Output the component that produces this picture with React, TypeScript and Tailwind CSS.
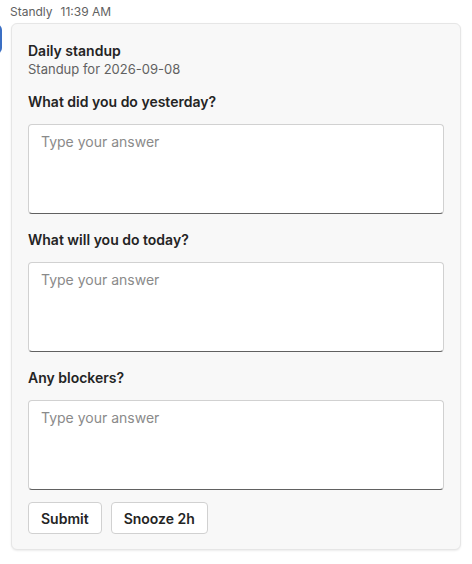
import React from "react";

function Question({ label, className }: { label: string; className: string }) {
  return (
    <div className={className}>
      <div className="text-[14px] leading-[20px] font-semibold text-[#242424]">{label}</div>
      <textarea
        placeholder="Type your answer"
        className="mt-[12px] block h-[90px] w-full resize-none rounded-[4px] border border-[#d1d1d1] border-b-[#616161] bg-white px-[12px] pt-[6px] text-[14px] leading-[22px] text-[#242424] placeholder:text-[#8a8a8a] outline-none"
      />
    </div>
  );
}

export default function App() {
  return (
    <div
      className="relative h-[564px] w-[472px] overflow-hidden bg-white"
      style={{ fontFamily: "Inter, 'Noto Sans', sans-serif" }}
    >
      <div className="absolute left-[-30px] top-[24px] h-[30px] w-[32px] rounded-[6px] bg-[#3b6fc4]" />
      <div className="flex h-[23px] items-center pl-[10px] text-[12px] text-[#616161]">
        <span>Standly</span>
        <span className="ml-[8px]">11:39 AM</span>
      </div>
      <div className="ml-[11px] w-[450px] rounded-[6px] border border-[#e6e6e6] bg-[#f8f8f8] px-[16px] pt-[17px] pb-[15px] shadow-[0_1px_2px_rgba(0,0,0,0.08)]">
        <div className="text-[14px] leading-[19px] font-semibold text-[#242424]">Daily standup</div>
        <div className="text-[13px] leading-[18px] text-[#616161]">Standup for 2026-09-08</div>
        <Question label="What did you do yesterday?" className="mt-[14px]" />
        <Question label="What will you do today?" className="mt-[16px]" />
        <Question label="Any blockers?" className="mt-[16px]" />
        <div className="mt-[12px] flex gap-[9px]">
          <button className="h-[32px] rounded-[4px] border border-[#d1d1d1] bg-white px-[12px] text-[14px] font-semibold text-[#242424]">
            Submit
          </button>
          <button className="h-[32px] rounded-[4px] border border-[#d1d1d1] bg-white px-[12px] text-[14px] font-semibold text-[#242424]">
            Snooze 2h
          </button>
        </div>
      </div>
    </div>
  );
}
